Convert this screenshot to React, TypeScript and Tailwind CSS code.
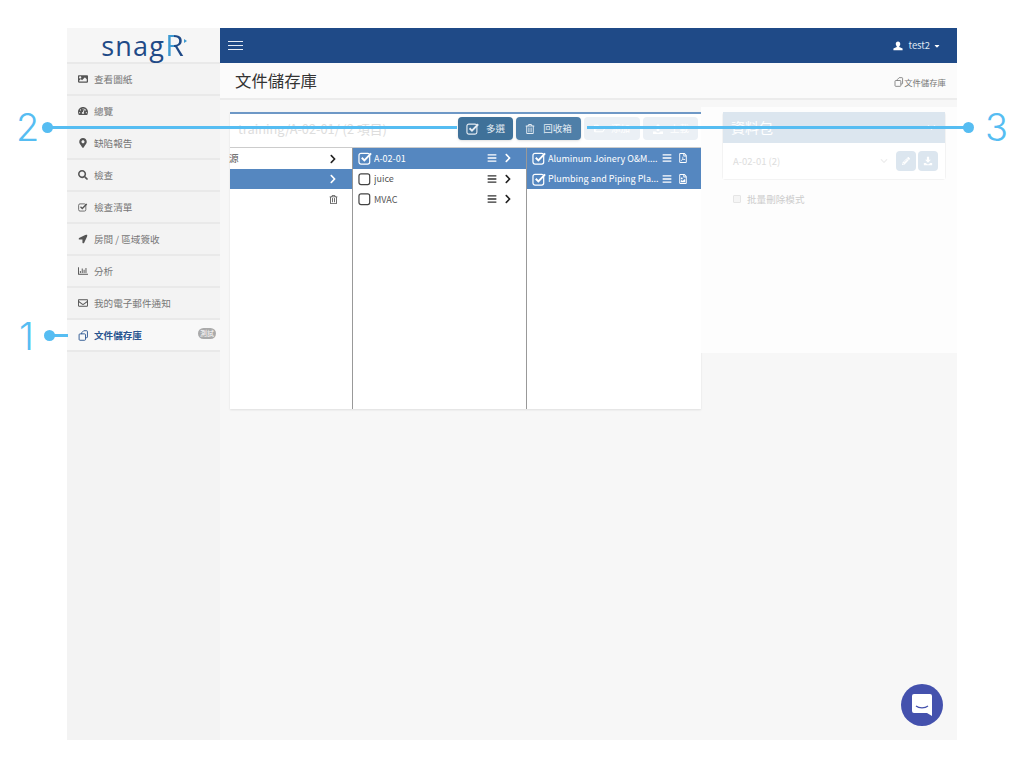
import React from "react";
import { FaImage, FaTachometerAlt, FaMapMarkerAlt, FaSearch, FaLocationArrow, FaRegChartBar, FaRegEnvelope, FaBars, FaChevronRight, FaChevronDown, FaRegTrashAlt, FaRegFilePdf, FaRegFileImage, FaPencilAlt, FaRegFolderOpen, FaCaretDown } from "react-icons/fa";

const font = { fontFamily: '"Noto Sans CJK TC","Noto Sans",sans-serif' };
const num = { fontFamily: 'Inter,"Liberation Sans",sans-serif' };

type IC = React.ComponentType<{ className?: string }>;

function CheckO({ className }: { className?: string }) {
  return (
    <svg viewBox="0 0 16 15" className={className} fill="none" stroke="currentColor">
      <rect x="1" y="2.5" width="11.5" height="11.5" rx="2.2" strokeWidth="1.3" />
      <path d="M4 7.2l2.8 2.8L14 2.6" strokeWidth="2.1" />
    </svg>
  );
}
function BoxO({ className }: { className?: string }) {
  return (
    <svg viewBox="0 0 16 15" className={className} fill="none" stroke="currentColor">
      <rect x="1" y="2" width="11.5" height="11.5" rx="2.2" strokeWidth="1.3" />
    </svg>
  );
}
function DocsIcon({ className }: { className?: string }) {
  return (
    <svg viewBox="0 0 12 12" className={className} fill="none" stroke="currentColor" strokeWidth="1">
      <path d="M4 4.500V3l2.200-2.200H9.500a.8.8 0 0 1 .8.8v6a.8.8 0 0 1-.8.8H8.200" />
      <rect x="1.200" y="4.200" width="7" height="7" rx="1" />
    </svg>
  );
}
function UserIcon({ className }: { className?: string }) {
  return (
    <svg viewBox="0 0 12 12" className={className} fill="currentColor">
      <path d="M6 .5c1.700 0 2.700 1.200 2.700 3 0 1.200-.5 2.200-1.200 2.800v1L11.500 9v2.200H.5V9l4-1.700v-1C3.800 5.700 3.300 4.700 3.300 3.500c0-1.800 1-3 2.700-3z" />
    </svg>
  );
}
function TrayArrow({ className, up }: { className?: string; up?: boolean }) {
  return (
    <svg viewBox="0 0 12 12" className={className} fill="currentColor">
      <path d={up ? "M6 1l3.500 3.500H7.300V8H4.700V4.500H2.500z" : "M4.700 1h2.600v3.500h2.200L6 8 2.500 4.500h2.200z"} />
      <path d="M1 8.500h2.500L5 9.800h2l1.500-1.300H11V11H1z" />
    </svg>
  );
}

function SmallArrow({ className }: { className?: string }) {
  return <FaLocationArrow className={`${className} scale-90`} />;
}

const nav: [IC, string][] = [
  [FaImage, "查看圖紙"],
  [FaTachometerAlt, "總覽"],
  [FaMapMarkerAlt, "缺陷報告"],
  [FaSearch, "檢查"],
  [CheckO, "檢查清單"],
  [SmallArrow, "房間 / 區域簽收"],
  [FaRegChartBar, "分析"],
  [FaRegEnvelope, "我的電子郵件通知"],
];

function NavItem({ Icon, label }: { Icon: IC; label: string }) {
  return (
    <div className="h-8 flex items-center pl-[11px] border-b-2 border-[#e9e9e9] text-[#777] text-[9.6px] bg-[#f3f3f3]">
      <span className="w-[16px] flex"><Icon className="w-[10px] h-[10px] text-[#555]" /></span>
      <span>{label}</span>
    </div>
  );
}

function Row({ label, active, last }: { label: string; active?: boolean; last?: React.ReactNode }) {
  return (
    <div className={`h-[20.5px] flex items-center text-[9px] pl-[5px] pr-[13px] ${active ? "bg-[#5587c0] text-white" : "text-[#555]"}`}>
      <span className={`w-[16px] flex ${active ? "" : "text-[#444]"}`}>{active ? <CheckO className="w-[15px] h-[14px]" /> : <BoxO className="w-[15px] h-[14px]" />}</span>
      <span className="flex-1 truncate">{label}</span>
      <FaBars className={`text-[10px] mr-[6px] ${active ? "" : "text-[#333]"}`} />
      {last}
    </div>
  );
}

export default function App() {
  return (
    <div className="relative w-[1024px] h-[768px] bg-white overflow-hidden" style={font}>
      <div className="absolute left-[67px] top-[28px] w-[890px] h-[712px] flex bg-[#f7f7f7]">
        <aside className="w-[153px] shrink-0 bg-[#f3f3f3]">
          <div className="h-9 flex items-end justify-center border-b-2 border-[#e9e9e9] bg-[#f6f6f6] pr-[2px]" style={{ fontFamily: '"Open Sans",sans-serif' }}>
            <span className="relative text-[27px] leading-[34px] h-[34px] -mt-px tracking-[1.2px] text-[#1f4a87]">
              snag
              <span className="text-[30px] bg-[linear-gradient(90deg,#3d9ad1_45%,#1f4a87_45%)] bg-clip-text text-transparent tracking-normal">R</span>
              <span className="absolute -right-[3px] top-[11px] w-0 h-0 border-y-[2px] border-y-transparent border-l-[3px] border-l-[#3d9ad1]" />
            </span>
          </div>
          {nav.map(([I, l]) => <NavItem key={l} Icon={I} label={l} />)}
          <div className="h-8 flex items-center pl-[11px] border-b-2 border-[#e9e9e9] text-[#2a5590] font-bold text-[9.6px] bg-[#f8f8f8]">
            <span className="w-[16px] flex"><DocsIcon className="w-[11px] h-[11px]" /></span>
            <span className="flex-1">文件儲存庫</span>
            <span className="bg-[#aaa] text-white text-[7px] leading-[11px] h-[11px] px-[2px] rounded-md mr-[4px] -mt-[4px] font-normal">測試</span>
          </div>
        </aside>
        <main className="flex-1 flex flex-col min-w-0">
          <header className="h-[35px] bg-[#1f4a87] flex items-center pl-2 pr-[16px] text-white">
            <div className="w-[15px] flex flex-col gap-[3px]">
              <span className="h-px bg-[#e6ecf5] block" />
              <span className="h-px bg-[#e6ecf5] block" />
              <span className="h-px bg-[#e6ecf5] block" />
            </div>
            <span className="flex-1" />
            <UserIcon className="w-[10px] h-[10px] mr-[5px]" />
            <span className="text-[9.4px] mr-[3px] text-[#dfe7f2]">test2</span>
            <FaCaretDown className="text-[8px]" />
          </header>
          <div className="h-[37px] bg-[#fbfbfb] border-b-2 border-[#ececec] flex items-center justify-between pl-[15px] pr-[11px]">
            <h1 className="text-[16.4px] text-[#333]">文件儲存庫</h1>
            <span className="flex items-center text-[8.4px] text-[#777] mt-[4px]"><DocsIcon className="w-[10px] h-[10px]" />文件儲存庫</span>
          </div>
          <div className="flex-1 flex items-start bg-[#f7f7f7]">
            <div className="ml-[10px] mt-[12px] w-[471px] h-[297px] bg-white border-t-2 border-[#6e98c6] shadow-[0_1px_2px_rgba(0,0,0,0.1)] flex flex-col">
              <div className="h-[34px] border-b border-[#ccc] flex items-start gap-[3px] pl-2 pr-[3px] pt-[3px] shrink-0 bg-white">
                <span className="flex-1 text-[12.8px] leading-[23px] text-[#ddd] truncate">training/A-02-01/ (2 項目)</span>
                <button className="w-[55px] h-[23px] rounded-sm bg-[#3f7199] text-[#e4ecf3] text-[9.5px] flex items-center justify-center gap-[6px] shadow-sm"><CheckO className="w-[14px] h-[13px]" />多選</button>
                <button className="w-[65px] h-[23px] rounded-sm bg-[#4f7fa8] text-[#e4ecf3] text-[9.5px] flex items-center justify-center gap-[8px] shadow-sm"><FaRegTrashAlt className="text-[10px]" />回收箱</button>
                <button className="w-[56px] h-[23px] rounded-sm bg-[#ebf0f5] text-white text-[9.5px] flex items-center justify-center gap-[6px]"><FaRegFolderOpen className="text-[11px]" />添加</button>
                <button className="w-[55px] h-[23px] rounded-sm bg-[#ebf0f5] text-white text-[9.5px] flex items-center justify-center gap-[6px]"><TrayArrow up className="w-[12px] h-[12px]" />上載</button>
              </div>
              <div className="flex-1 flex">
                <div className="w-[123px] border-r border-[#999] text-[9.6px] text-[#555]">
                  <div className="h-[21px] flex items-center justify-between pr-[14px]"><span className="-ml-[1px]">源</span><FaChevronRight className="text-[10px] text-[#222]" /></div>
                  <div className="h-[20px] flex items-center justify-end pr-[14px] bg-[#5587c0] text-white"><FaChevronRight className="text-[10px]" /></div>
                  <div className="h-[21px] flex items-center justify-end pr-[14px]"><FaRegTrashAlt className="text-[9px]" /></div>
                </div>
                <div className="w-[174px] border-r border-[#999]">
                  <Row label="A-02-01" active last={<FaChevronRight className="text-[10px]" />} />
                  <Row label="juice" last={<FaChevronRight className="text-[10px] text-[#222]" />} />
                  <Row label="MVAC" last={<FaChevronRight className="text-[10px] text-[#222]" />} />
                </div>
                <div className="flex-1 min-w-0">
                  <Row label="Aluminum Joinery O&M...." active last={<FaRegFilePdf className="text-[10px]" />} />
                  <Row label="Plumbing and Piping Pla..." active last={<FaRegFileImage className="text-[10px]" />} />
                </div>
              </div>
            </div>
            <div className="mt-[7px] h-[246px] flex-1 bg-[#fdfdfd] pl-[21px] pr-[11px] pt-[5px]">
              <div className="border border-[#f3f3f3] border-t-0 rounded-sm">
                <div className="h-[31px] bg-[#dce6ef] flex items-center justify-between pl-[8px] pr-[9px] text-white text-[14px]"><span>資料包</span><FaChevronDown className="text-[9px]" /></div>
                <div className="h-[36px] flex items-center pl-[10px] pr-[7px] text-[#ddd] text-[9.5px] bg-white">
                  <span className="flex-1">A-02-01 (2)</span>
                  <FaChevronDown className="text-[8px] text-[#eee] mr-[8px]" />
                  <span className="w-5 h-5 rounded-sm bg-[#dce6ef] flex items-center justify-center text-white mr-[2px]"><FaPencilAlt className="text-[8px]" /></span>
                  <span className="w-5 h-5 rounded-sm bg-[#dce6ef] flex items-center justify-center text-white"><TrayArrow className="w-[10px] h-[10px]" /></span>
                </div>
              </div>
              <div className="flex items-center mt-[12px] ml-[11px] text-[9.6px] text-[#ccc]">
                <span className="w-2 h-2 border border-[#e5e5e5] bg-[#f5f5f5] rounded-[1px] mr-[6px]" />批量刪除模式
              </div>
            </div>
          </div>
        </main>
        <div className="absolute right-[14px] bottom-[14px] w-[42px] h-[42px] rounded-full bg-[#4451ad] flex items-center justify-center">
          <svg width="22" height="24" viewBox="0 0 22 24"><path d="M3 1h16a2 2 0 0 1 2 2v20l-5-3H3a2 2 0 0 1-2-2V3a2 2 0 0 1 2-2z" fill="#fff" /><path d="M5 13c3 2.500 9 2.500 12 0" stroke="#4451ad" strokeWidth="1.2" fill="none" /></svg>
        </div>
      </div>
      {/* tutorial call-outs */}
      <div className="absolute left-[48px] top-[125.5px] w-[409px] h-[3px] bg-[#56bdf2]" />
      <div className="absolute left-[587px] top-[125.5px] w-[382px] h-[3px] bg-[#56bdf2]" />
      <div className="absolute left-[49px] top-[333.5px] w-[19px] h-[3px] bg-[#56bdf2]" />
      <div className="absolute left-[42px] top-[121.5px] w-[11px] h-[11px] rounded-full bg-[#56bdf2]" />
      <div className="absolute left-[963px] top-[121.5px] w-[11px] h-[11px] rounded-full bg-[#56bdf2]" />
      <div className="absolute left-[44px] top-[329.5px] w-[11px] h-[11px] rounded-full bg-[#56bdf2]" />
      <span className="absolute left-[16px] top-[105px] text-[38px] font-light leading-[44px] text-[#56bdf2]" style={num}>2</span>
      <span className="absolute left-[985px] top-[105px] text-[38px] font-light leading-[44px] text-[#56bdf2]" style={num}>3</span>
      <span className="absolute left-[19px] top-[314px] text-[38px] font-light leading-[44px] text-[#56bdf2]" style={num}>1</span>
    </div>
  );
}
